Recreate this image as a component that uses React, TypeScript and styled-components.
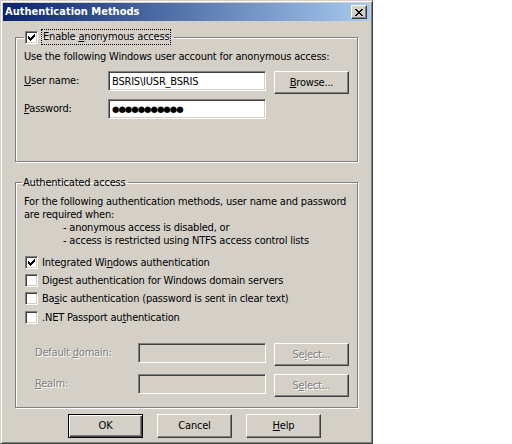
import React from 'react';
import styled, { createGlobalStyle } from 'styled-components';

const GlobalStyle = createGlobalStyle`
  html, body {
    margin: 0;
    padding: 0;
    background: #fff;
  }
  body {
    font-family: "DejaVu Sans Condensed", "DejaVu Sans", sans-serif;
    font-size: 11px;
    letter-spacing: -0.2px;
    color: #000;
  }
`;

const Window = styled.div`
  box-sizing: border-box;
  width: 373px;
  height: 444px;
  padding: 2px;
  display: flex;
  flex-direction: column;
  background: #d4d0c8;
  border: 1px solid;
  border-color: #d4d0c8 #404040 #404040 #d4d0c8;
  box-shadow: inset 1px 1px #fff, inset -1px -1px #808080;
`;

const TitleBar = styled.div`
  height: 18px;
  display: flex;
  align-items: center;
  padding: 0 3px 0 2px;
  background: linear-gradient(to right, #0a246a, #a6caf0);
  color: #fff;
  font-weight: bold;
  letter-spacing: 0;
`;

const TitleText = styled.span`
  flex: 1;
  line-height: 18px;
`;

const CloseButton = styled.div`
  box-sizing: border-box;
  width: 16px;
  height: 14px;
  display: flex;
  align-items: center;
  justify-content: center;
  background: #d4d0c8;
  border: 1px solid;
  border-color: #fff #404040 #404040 #fff;
  box-shadow: inset -1px -1px #808080;
`;

const Body = styled.div`
  flex: 1;
  display: flex;
  flex-direction: column;
  padding: 8px 12px 0;
`;

const Group = styled.fieldset<{ $bottom: number; $top?: number }>`
  margin: ${(p) => p.$top ?? 0}px 0 0;
  min-width: 0;
  padding: 0 8px ${(p) => p.$bottom}px;
  border: 1px solid #808080;
  box-shadow: 1px 1px 0 #fff, inset 1px 1px 0 #fff;
`;

const Legend = styled.legend<{ $shift: number }>`
  display: flex;
  align-items: center;
  padding: 0 3px 0 1px;
  margin-left: ${(p) => p.$shift}px;
  line-height: 13px;
`;

const FocusLabel = styled.span`
  margin-left: 3px;
  padding: 0 1px 1px;
  border: 1px dotted #000;
`;

const Text = styled.div<{ $indent?: number; $top?: number }>`
  line-height: 13px;
  margin-top: ${(p) => p.$top ?? 0}px;
  padding-left: ${(p) => p.$indent ?? 0}px;
  white-space: nowrap;
`;

const FieldGrid = styled.div<{ $labelWidth: number; $top: number; $gap: number; $indent?: number }>`
  display: grid;
  grid-template-columns: ${(p) => p.$labelWidth}px 1fr 75px;
  column-gap: 8px;
  row-gap: ${(p) => p.$gap}px;
  align-items: start;
  margin-top: ${(p) => p.$top}px;
  padding-left: ${(p) => p.$indent ?? 0}px;
`;

const Label = styled.span<{ $disabled?: boolean }>`
  line-height: 20px;
  white-space: nowrap;
  color: ${(p) => (p.$disabled ? '#808080' : '#000')};
  text-shadow: ${(p) => (p.$disabled ? '1px 1px 0 #fff' : 'none')};
`;

const Field = styled.div<{ $disabled?: boolean }>`
  box-sizing: border-box;
  height: 20px;
  padding: 0 3px;
  display: flex;
  align-items: center;
  background: ${(p) => (p.$disabled ? '#d4d0c8' : '#fff')};
  border: 1px solid;
  border-color: #808080 #fff #fff #808080;
  box-shadow: inset 1px 1px #404040, inset -1px -1px #d4d0c8;
  white-space: nowrap;
`;

const Dots = styled.span`
  font-family: "DejaVu Sans", sans-serif;
  font-size: 8.5px;
  letter-spacing: -1px;
`;

const Button = styled.div<{ $disabled?: boolean; $default?: boolean }>`
  box-sizing: border-box;
  height: 23px;
  display: flex;
  align-items: center;
  justify-content: center;
  background: #d4d0c8;
  border: 1px solid;
  border-color: ${(p) => (p.$default ? '#000' : '#fff #404040 #404040 #fff')};
  box-shadow: ${(p) =>
    p.$default
      ? 'inset 1px 1px #fff, inset -1px -1px #404040, inset -2px -2px #808080'
      : 'inset -1px -1px #808080'};
  color: ${(p) => (p.$disabled ? '#808080' : '#000')};
  text-shadow: ${(p) => (p.$disabled ? '1px 1px 0 #fff' : 'none')};
  white-space: nowrap;
`;

const CheckList = styled.div`
  display: flex;
  flex-direction: column;
  margin-top: 6px;
`;

const CheckRow = styled.div`
  height: 18.4px;
  display: flex;
  align-items: center;
  padding-left: 1px;
  white-space: nowrap;
`;

const Box = styled.span<{ $gap?: number }>`
  box-sizing: border-box;
  width: 13px;
  height: 13px;
  flex: none;
  display: flex;
  align-items: center;
  justify-content: center;
  margin-right: ${(p) => p.$gap ?? 4}px;
  background: #fff;
  border: 1px solid;
  border-color: #808080 #fff #fff #808080;
  box-shadow: inset 1px 1px #404040, inset -1px -1px #d4d0c8;
`;

const Footer = styled.div`
  display: flex;
  gap: 14px;
  margin: 6px 0 0 53px;
`;

const FooterButton = styled(Button)`
  width: 75px;
  height: 24px;
`;

const CheckMark = () => (
  <svg width="7" height="7" viewBox="0 0 7 7" shapeRendering="crispEdges">
    <path
      d="M6 0h1v1h-1z M5 1h2v1h-2z M0 2h1v1h-1z M4 2h3v1h-3z M0 3h2v1h-2z M3 3h3v1h-3z M0 4h5v1h-5z M1 5h3v1h-3z M2 6h1v1h-1z"
      fill="#000"
    />
  </svg>
);

const CloseGlyph = () => (
  <svg width="8" height="7" viewBox="0 0 8 7" shapeRendering="crispEdges">
    <path
      d="M0 0h2v1h-2z M6 0h2v1h-2z M1 1h2v1h-2z M5 1h2v1h-2z M2 2h4v1h-4z M3 3h2v1h-2z M2 4h4v1h-4z M1 5h2v1h-2z M5 5h2v1h-2z M0 6h2v1h-2z M6 6h2v1h-2z"
      fill="#000"
    />
  </svg>
);

const Check: React.FC<{ checked?: boolean; children: React.ReactNode }> = ({ checked, children }) => (
  <CheckRow>
    <Box>{checked && <CheckMark />}</Box>
    <span>{children}</span>
  </CheckRow>
);

export default function App() {
  return (
    <>
      <GlobalStyle />
      <Window>
        <TitleBar>
          <TitleText>Authentication Methods</TitleText>
          <CloseButton>
            <CloseGlyph />
          </CloseButton>
        </TitleBar>
        <Body>
          <Group $bottom={42}>
            <Legend $shift={0}>
              <Box $gap={0}>
                <CheckMark />
              </Box>
              <FocusLabel>
                Enable <u>a</u>nonymous access
              </FocusLabel>
            </Legend>
            <Text $top={5}>Use the following Windows user account for anonymous access:</Text>
            <FieldGrid $labelWidth={76} $top={8} $gap={5}>
              <Label>
                <u>U</u>ser name:
              </Label>
              <Field>BSRIS\IUSR_BSRIS</Field>
              <Button>
                <u>B</u>rowse...
              </Button>
              <Label>
                <u>P</u>assword:
              </Label>
              <Field>
                <Dots>●●●●●●●●●●●</Dots>
              </Field>
              <span />
            </FieldGrid>
          </Group>

          <Group $bottom={10} $top={14}>
            <Legend $shift={-2}>Authenticated access</Legend>
            <Text $top={6}>For the following authentication methods, user name and password</Text>
            <Text>are required when:</Text>
            <Text $indent={39}>- anonymous access is disabled, or</Text>
            <Text $indent={39}>- access is restricted using NTFS access control lists</Text>
            <CheckList>
              <Check checked>
                Integrated Wi<u>n</u>dows authentication
              </Check>
              <Check>
                Di<u>g</u>est authentication for Windows domain servers
              </Check>
              <Check>
                Ba<u>s</u>ic authentication (password is sent in clear text)
              </Check>
              <Check>
                .NET Passport au<u>t</u>hentication
              </Check>
            </CheckList>
            <FieldGrid $labelWidth={95} $top={16} $gap={8} $indent={11}>
              <Label $disabled>
                Default <u>d</u>omain:
              </Label>
              <Field $disabled />
              <Button $disabled>
                Se<u>l</u>ect...
              </Button>
              <Label $disabled>
                <u>R</u>ealm:
              </Label>
              <Field $disabled />
              <Button $disabled>
                S<u>e</u>lect...
              </Button>
            </FieldGrid>
          </Group>

          <Footer>
            <FooterButton $default>OK</FooterButton>
            <FooterButton>Cancel</FooterButton>
            <FooterButton>
              <u>H</u>elp
            </FooterButton>
          </Footer>
        </Body>
      </Window>
    </>
  );
}
